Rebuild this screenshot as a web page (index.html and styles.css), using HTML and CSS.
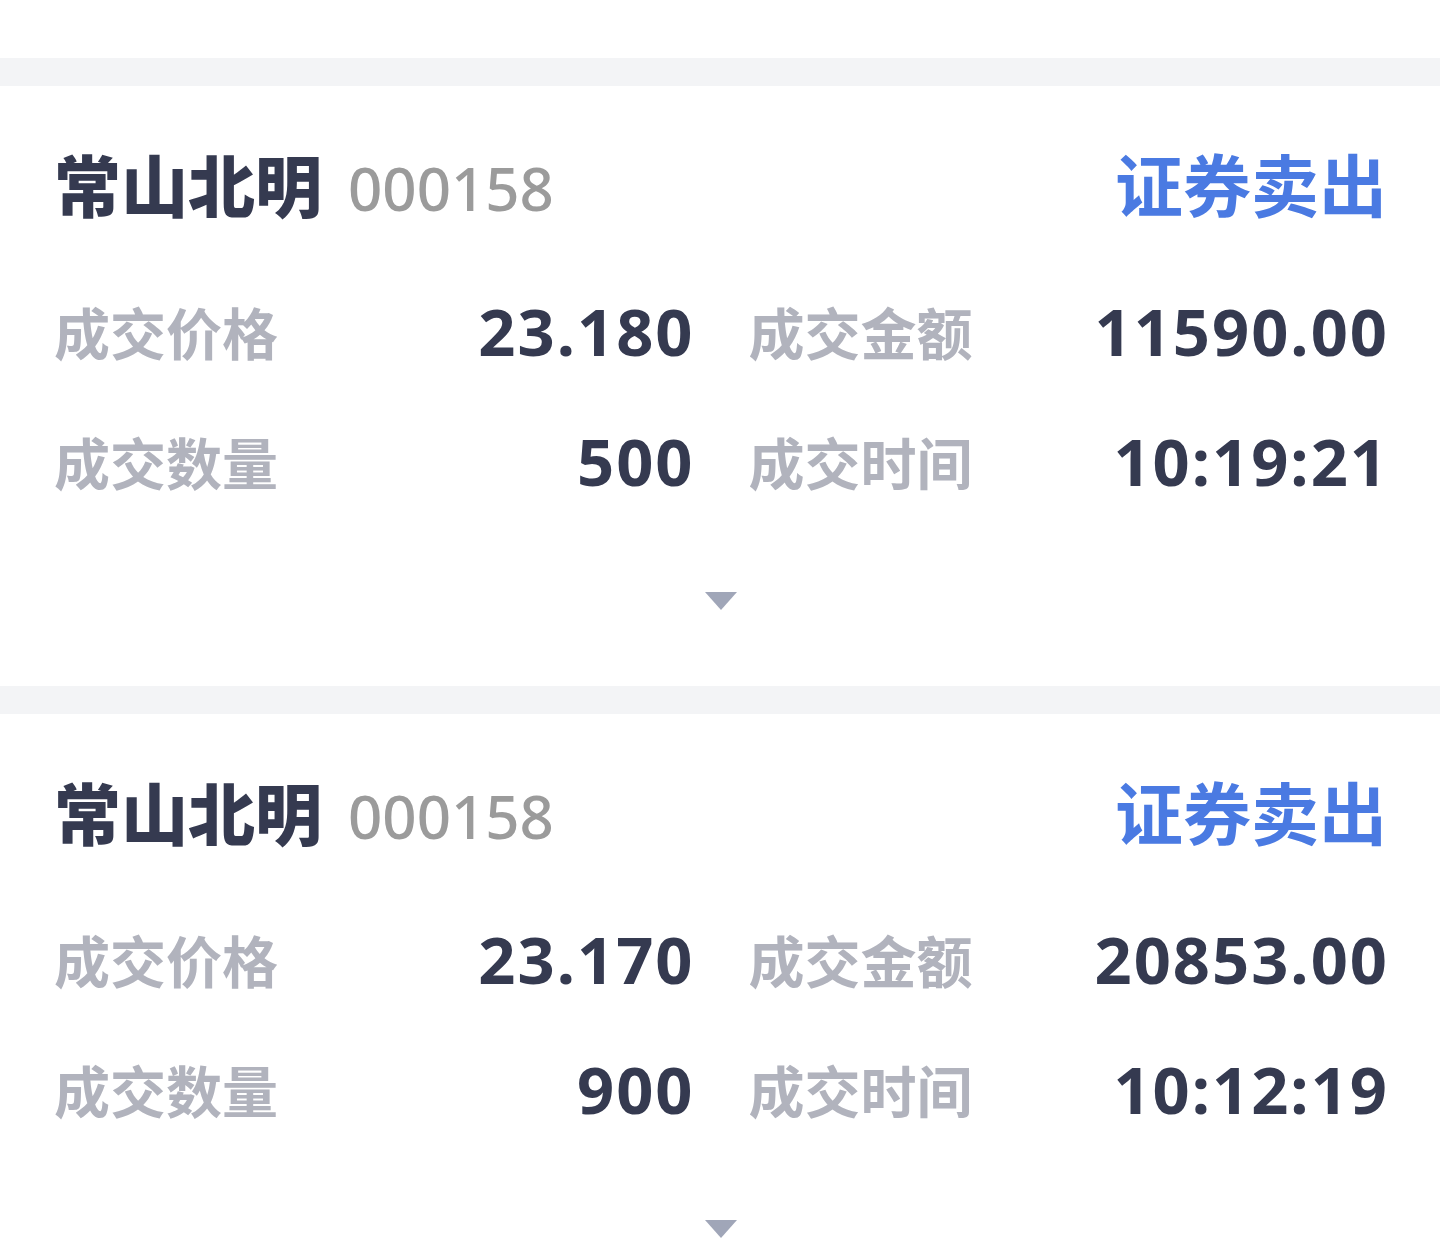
FILE: index.html
```html
<!DOCTYPE html>
<html lang="zh-CN">
<head>
<meta charset="utf-8">
<title>成交记录</title>
<link rel="stylesheet" href="styles.css">
</head>
<body>
<div class="top"></div>
<div class="sep"></div>
<section class="card">
  <div class="head">
    <div class="name"><span class="title">常山北明</span><span class="code">000158</span></div>
    <div class="dir">证券卖出</div>
  </div>
  <div class="grid">
    <div class="cell"><span class="label">成交价格</span><span class="value">23.180</span></div>
    <div class="cell"><span class="label">成交金额</span><span class="value">11590.00</span></div>
    <div class="cell"><span class="label">成交数量</span><span class="value">500</span></div>
    <div class="cell"><span class="label">成交时间</span><span class="value">10:19:21</span></div>
  </div>
  <div class="more"><span class="tri"></span></div>
</section>
<div class="sep"></div>
<section class="card">
  <div class="head">
    <div class="name"><span class="title">常山北明</span><span class="code">000158</span></div>
    <div class="dir">证券卖出</div>
  </div>
  <div class="grid">
    <div class="cell"><span class="label">成交价格</span><span class="value">23.170</span></div>
    <div class="cell"><span class="label">成交金额</span><span class="value">20853.00</span></div>
    <div class="cell"><span class="label">成交数量</span><span class="value">900</span></div>
    <div class="cell"><span class="label">成交时间</span><span class="value">10:12:19</span></div>
  </div>
  <div class="more"><span class="tri"></span></div>
</section>
</body>
</html>
```
FILE: styles.css
```css
* { box-sizing: border-box; }
html, body { margin: 0; padding: 0; background: #ffffff; }
body {
  font-family: "Noto Sans", "Noto Sans CJK SC", sans-serif;
  color: #353a50;
  overflow: hidden;
}
.top { height: 58px; background: #ffffff; }
.sep { height: 28px; background: #f3f4f6; }
.card {
  height: 600px;
  padding: 52px 53px 0 54px;
  background: #ffffff;
}
.head {
  display: flex;
  justify-content: space-between;
  align-items: center;
  height: 90px;
}
.name { display: flex; align-items: center; }
.title {
  font-family: "Noto Sans CJK SC", sans-serif;
  font-weight: 900;
  font-size: 67px;
  line-height: 90px;
  color: #353a50;
}
.code {
  font-family: "Noto Sans", "Noto Sans CJK SC", sans-serif;
  font-weight: 500;
  font-size: 60px;
  line-height: 90px;
  color: #9b9b9b;
  margin-left: 26px;
  margin-top: 9px;
}
.dir {
  font-family: "Noto Sans CJK SC", sans-serif;
  font-weight: 700;
  font-size: 68px;
  line-height: 90px;
  color: #4a7ae2;
}
.grid {
  display: grid;
  grid-template-columns: 1fr 1fr;
  column-gap: 56px;
  margin-top: 38px;
}
.cell {
  display: flex;
  justify-content: space-between;
  align-items: center;
  height: 130px;
}
.label {
  font-family: "Noto Sans CJK SC", sans-serif;
  font-weight: 700;
  font-size: 56px;
  color: #b1b3bd;
  line-height: 130px;
}
.value {
  font-family: "Noto Sans", sans-serif;
  font-weight: 700;
  font-size: 65px;
  letter-spacing: 2px;
  margin-right: -2px;
  color: #353a50;
  line-height: 130px;
}
.more {
  display: flex;
  justify-content: center;
  margin-top: 66px;
}
.tri {
  width: 0;
  height: 0;
  border-left: 16px solid transparent;
  border-right: 16px solid transparent;
  border-top: 18px solid #a0a6b8;
}
```
